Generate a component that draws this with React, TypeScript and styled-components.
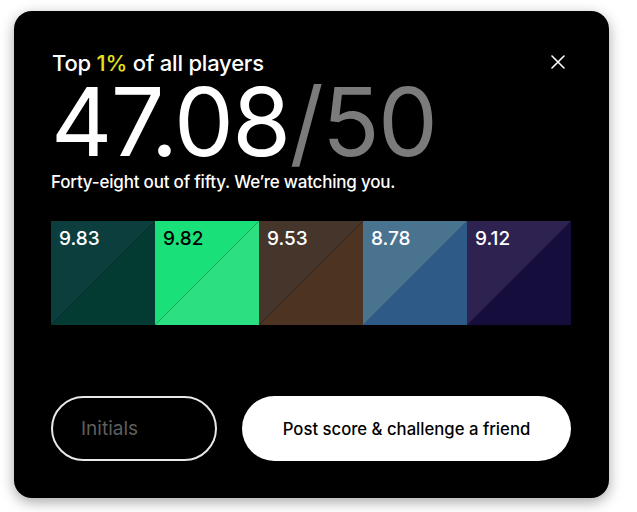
import React from "react";
import styled, { createGlobalStyle } from "styled-components";

const Global = createGlobalStyle`
  html, body { margin: 0; padding: 0; background: #ffffff; }
  body { font-family: Inter, "Noto Sans", sans-serif; }
  * { box-sizing: border-box; }
`;

const Page = styled.div`
  padding: 11px 0 0 14px;
  width: 637px;
  height: 512px;
`;

const Card = styled.div`
  width: 595px;
  height: 487px;
  background: #000;
  border-radius: 18px;
  box-shadow: 0 4px 14px rgba(0, 0, 0, 0.35);
  padding: 39px 38px 37px 37px;
  display: flex;
  flex-direction: column;
  color: #fff;
`;

const Header = styled.div`
  display: flex;
  justify-content: space-between;
  align-items: flex-start;
`;

const Rank = styled.div`
  font-size: 22px;
  font-weight: 500;
  line-height: 26px;
  letter-spacing: -0.2px;
  padding-left: 1px;
`;

const Accent = styled.span`
  color: #e6e11a;
`;

const Close = styled.button`
  background: none;
  border: none;
  padding: 0;
  margin: 5px 6px 0 0;
  width: 14px;
  height: 14px;
  cursor: pointer;
  display: flex;
`;

const Score = styled.div`
  font-size: 95px;
  font-weight: 400;
  line-height: 88px;
  letter-spacing: -1.7px;
  margin-top: 2px;
`;

const Total = styled.span`
  color: #7b7b7b;
`;

const Tagline = styled.div`
  font-size: 17px;
  font-weight: 500;
  line-height: 22px;
  margin-top: 5px;
  letter-spacing: -0.2px;
`;

const Tiles = styled.div`
  display: grid;
  grid-template-columns: repeat(5, 104px);
  margin-top: 28px;
`;

const Tile = styled.div<{ $a: string; $b: string; $line: string; $dark?: boolean }>`
  height: 104px;
  padding: 6px 8px;
  font-size: 19px;
  font-weight: 500;
  line-height: 24px;
  color: ${(p) => (p.$dark ? "#000" : "#fff")};
  background: linear-gradient(
    to bottom right,
    ${(p) => p.$a} 49.6%,
    ${(p) => p.$line} 49.8%,
    ${(p) => p.$line} 50.2%,
    ${(p) => p.$b} 50.4%
  );
`;

const Actions = styled.div`
  display: flex;
  gap: 25px;
  margin-top: auto;
`;

const Initials = styled.input`
  width: 166px;
  height: 65px;
  border-radius: 33px;
  border: 2px solid #e8e8e8;
  background: #000;
  color: #fff;
  font-family: Inter, "Noto Sans", sans-serif;
  font-size: 19px;
  padding: 0 0 0 28px;
  outline: none;
  &::placeholder {
    color: #5f5f5f;
  }
`;

const Post = styled.button`
  flex: 1;
  height: 65px;
  border-radius: 33px;
  border: none;
  background: #fff;
  color: #000;
  font-family: Inter, "Noto Sans", sans-serif;
  font-size: 16.7px;
  font-weight: 500;
  cursor: pointer;
`;

const scores = [
  { v: "9.83", a: "#0d3e3e", b: "#033a32", line: "#06302c" },
  { v: "9.82", a: "#1ae07a", b: "#2cdf80", line: "#16a85c", dark: true },
  { v: "9.53", a: "#45352a", b: "#4c3322", line: "#33261c" },
  { v: "8.78", a: "#4a7390", b: "#2d5a86", line: "#3a5a74" },
  { v: "9.12", a: "#2e2350", b: "#150e3d", line: "#201840" },
];

export default function App() {
  return (
    <Page>
      <Global />
      <Card>
        <Header>
          <Rank>
            Top <Accent>1%</Accent> of all players
          </Rank>
          <Close aria-label="Close">
            <svg width="14" height="14" viewBox="0 0 14 14">
              <path d="M1 1L13 13M13 1L1 13" stroke="#fff" strokeWidth="1.6" strokeLinecap="round" />
            </svg>
          </Close>
        </Header>
        <Score>
          47.08<Total>/50</Total>
        </Score>
        <Tagline>Forty-eight out of fifty. We’re watching you.</Tagline>
        <Tiles>
          {scores.map((s) => (
            <Tile key={s.v} $a={s.a} $b={s.b} $line={s.line} $dark={s.dark}>
              {s.v}
            </Tile>
          ))}
        </Tiles>
        <Actions>
          <Initials placeholder="Initials" />
          <Post>Post score &amp; challenge a friend</Post>
        </Actions>
      </Card>
    </Page>
  );
}
